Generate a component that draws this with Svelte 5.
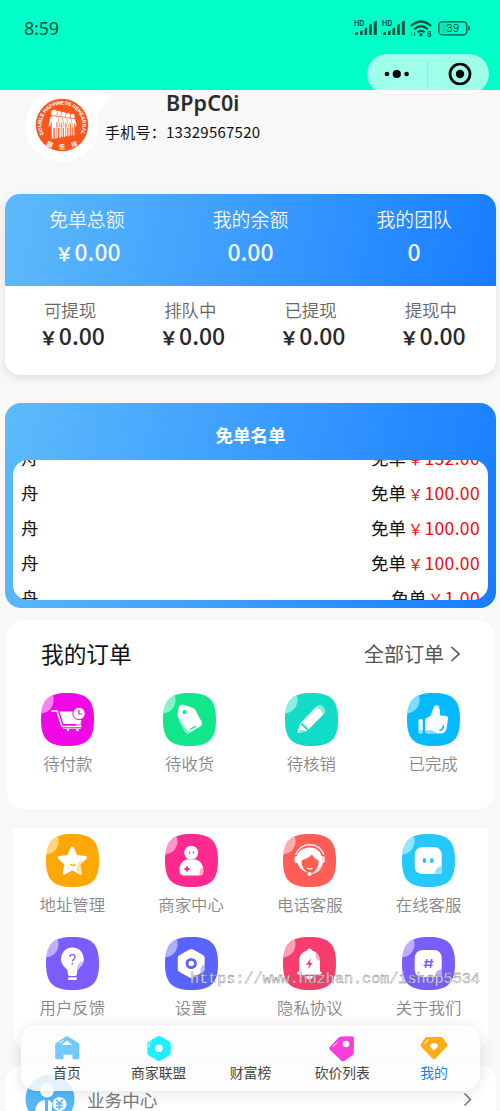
<script lang="ts">
	const totals = [
		{ label: '免单总额', sign: '￥', value: '0.00' },
		{ label: '我的余额', sign: '', value: '0.00' },
		{ label: '我的团队', sign: '', value: '0' }
	];

	const balances = [
		{ label: '可提现', sign: '￥', value: '0.00' },
		{ label: '排队中', sign: '￥', value: '0.00' },
		{ label: '已提现', sign: '￥', value: '0.00' },
		{ label: '提现中', sign: '￥', value: '0.00' }
	];

	const winners = ['132.00', '100.00', '100.00', '100.00', '1.00'];

	const orders = [
		{ icon: 'cart', color: '#f008e4', label: '待付款' },
		{ icon: 'tag', color: '#12e68b', label: '待收货' },
		{ icon: 'pencil', color: '#12dcc8', label: '待核销' },
		{ icon: 'thumb', color: '#05b9ff', label: '已完成' }
	];

	const services = [
		{ icon: 'star', color: '#ffa703', label: '地址管理' },
		{ icon: 'person', color: '#ff2a90', label: '商家中心' },
		{ icon: 'headset', color: '#ff5d56', label: '电话客服' },
		{ icon: 'chat', color: '#25c8ff', label: '在线客服' },
		{ icon: 'bulb', color: '#7a5cff', label: '用户反馈' },
		{ icon: 'hexagon', color: '#5963ff', label: '设置' },
		{ icon: 'bell', color: '#f63d6c', label: '隐私协议' },
		{ icon: 'hash', color: '#7a5cff', label: '关于我们' }
	];

	const tabs = [
		{ icon: 'home', label: '首页' },
		{ icon: 'shop', label: '商家联盟' },
		{ icon: '', label: '财富榜' },
		{ icon: 'price', label: '砍价列表' },
		{ icon: 'mine', label: '我的' }
	];

	let activeTab = $state('我的');
</script>

{#snippet signal()}
	<svg class="signal" width="24" height="16" viewBox="0 0 24 16">
		<text x="0" y="6.2" font-size="7" font-weight="700">HD</text>
		<path d="M1 15v-2l3-1v3zM6 15v-4l2.500-1v5zM10.500 15V8.500l2.600-1V15zM15 15V5l2.800-1.300V15zM19.800 15V2l3-1.500V15z" />
	</svg>
{/snippet}

{#snippet stat(item)}
	<div class="stat">
		<span>{item.label}</span>
		<strong>{#if item.sign}<i>{item.sign}</i>{/if}{item.value}</strong>
	</div>
{/snippet}

{#snippet tile(icon, color)}
	<svg class="tile" width="53" height="53" viewBox="0 0 53 53" fill="#fff">
		<path
			d="M26.500 0C46 0 53 7 53 26.500S46 53 26.500 53 0 46 0 26.500 7 0 26.500 0z"
			fill={color}
		/>
		<path d="M11.700 2.200A13.500 13.500 0 0 1 .3 20.500Q1.700 5 11.700 2.200z" opacity=".5" />
		{#if icon === 'cart'}
			<path d="M18.500 18.500h21.500v10l-1.500 2.500H22.500z" />
			<path d="M36 27h4.500l-.5 6h-5z" opacity=".6" />
			<path d="M10 18h6l5 15.500h19.500" fill="none" stroke="#fff" stroke-width="1.700" />
			<path d="M22 35.500h18" stroke="#fff" stroke-width="1" opacity=".6" />
			<circle cx="27" cy="37" r="1.300" />
			<circle cx="36.500" cy="37" r="1.300" />
			<circle cx="38" cy="20.500" r="6.200" stroke={color} />
			<path d="M38 17v4h3" fill="none" stroke={color} stroke-width="1.200" />
		{:else if icon === 'tag'}
			<path d="M15 26l7 13q2 3 5 1l6-4z" opacity=".5" />
			<path
				fill-rule="evenodd"
				d="M18 12q1-1 3-.3l9 3.300q1.500.6 2.300 2l6.200 11.500q1.600 3-1 4.800l-9 5q-2.500 1.300-4.200-1l-8.800-12.300q-1.200-1.600-1-3l1-7.500q.2-2 2.500-2.500zM21.500 17a2.100 2.100 0 1 0 .1 0z"
			/>
			<path d="M27.500 36.200l5-2.800" stroke={color} stroke-width="1.300" stroke-linecap="round" />
		{:else if icon === 'pencil'}
			<path d="M31 14q3-3.500 6.500-.5t2 6.800l-16 16.200-8-6.500z" />
			<path d="M31 14q3-3.500 6.500-.5t2 6.800l-1.500 1.500q-1-5-7-7.800z" fill={color} opacity=".5" />
			<path d="M15 30.500l7.500 7-8.500 2.700q-2 .3-1.500-1.700z" />
			<path d="M12.500 39q3-4 8-1l-7 2.300z" fill={color} opacity=".5" />
			<path d="M16.500 30.500l6 5.500" stroke={color} stroke-width="1.500" />
		{:else if icon === 'thumb'}
			<rect x="11.500" y="26" width="4.200" height="14.500" rx="1.300" />
			<path
				d="M18 27q0-1.500 1.500-2l3-1.500q1.300-.8 1.800-2.500l2.500-7q1-2.500 3.400-2 2.300.5 2.400 3l.4 7.500 5.500.3q2.700.5 2.500 3l-1.400 9.700q-.8 4.500-5.100 4.900H21q-3 0-3-2.500z"
			/>
			<path d="M11.500 37h4.200v2.500q-2 2-4.200 0zM18 38q6-3 13 2.500H21q-3 0-3-2.500zM28 13q2-2 5 1.500v2q-2-3-5-3.500z" fill={color} opacity=".45" />
			<path d="M36.500 32.500q-.5 4-3.500 5" fill="none" stroke={color} stroke-width="1.500" stroke-linecap="round" />
		{:else if icon === 'star'}
			<path
				d="M26.300 14l3.900 8.400 9.300 1.200-6.800 6.400 1.700 9.200-8.100-4.500-8.100 4.500L20 30l-6.800-6.400 9.200-1.200z"
				stroke="#fff"
				stroke-width="3"
				stroke-linejoin="round"
			/>
			<path d="M31.500 31q2-5 6-5l-3.500 4.500 1.800 9q-4 0-5.300-4z" fill={color} opacity=".35" />
			<path d="M24.500 30.200q2.300 2.400 4.700 0" fill="none" stroke={color} stroke-width="1.300" stroke-linecap="round" />
		{:else if icon === 'person'}
			<circle cx="26.200" cy="18.700" r="7" />
			<path d="M21 25.500h10q7.500 3 7.500 11.500 0 4.500-4 4.500H19q-4.500 0-4.500-5.500 0-7.500 6.500-10.500z" />
			<path d="M38.500 33v4q0 4.500-4 4.500-1-7 4-8.500z" fill={color} opacity=".4" />
			<path d="M24.500 17.500v2M28.500 17.500v2" stroke={color} stroke-width="1.300" />
			<path d="M19.500 35h5M22 32.500v5" stroke={color} stroke-width="2" />
		{:else if icon === 'headset'}
			<path d="M12.500 21q4-10 14.200-10.300Q37 11 41 21" fill="none" stroke="#fff" stroke-width="1.200" />
			<path d="M26.700 13.500c8 0 13 6 12.500 14-1 6-5 10-9 11 4-3 5.500-6.500 5.500-12-3-1-5-3-6.700-6-3 3-6 4.500-10.500 6-.3 5 2 9 6 12-6-1-11-8-11-14s5-11 13.200-11z" />
			<rect x="11.500" y="22" width="4.500" height="7" rx="2" />
			<rect x="37.500" y="22" width="4.500" height="7" rx="2" opacity=".7" />
			<path d="M39.700 28q-2 11-12.500 12" fill="none" stroke="#fff" stroke-width="1.200" />
			<circle cx="26.500" cy="40" r="2" />
			<path d="M24 34q3 1.800 5.500 0" fill="none" stroke="#fff" stroke-width="1.200" />
		{:else if icon === 'chat' || icon === 'hash'}
			<path d="M21.500 13h10q8.200 0 8.200 8.500V40H20.500q-7.500 0-7.800-7.500V21.500q0-8.500 8.800-8.500z" />
			<path d="M39.700 32v8h-7q.5-7 7-8z" fill={color} opacity=".5" />
			{#if icon === 'chat'}
				<ellipse cx="22.500" cy="26.500" rx="1.900" ry="2.500" fill={color} />
				<ellipse cx="29.800" cy="26.500" rx="1.900" ry="2.500" fill={color} />
			{:else}
				<path d="M25 22l-1.500 9M29.800 22l-1.500 9M22.300 24.800h9M21.600 28.300h9" stroke={color} stroke-width="1.500" />
			{/if}
		{:else if icon === 'bulb'}
			<path d="M26.300 10.500a11.400 11.400 0 0 1 7 20.400q-2.200 1.600-2.300 4v2q0 2-2 2h-5.200q-2 0-2-2v-2q0-2.400-2.300-4a11.400 11.400 0 0 1 6.800-20.400z" />
			<path d="M37.500 24q-6 1-7 9l2.800-2.100q3.500-2.700 4.200-6.900z" fill={color} opacity=".4" />
			<rect x="22" y="40.200" width="9" height="2.700" rx="1.200" />
			<path d="M23.700 20.300q.2-2.600 2.800-2.600t2.500 2.500c0 2-2.700 2-2.700 4.300M26.300 26v1.600" fill="none" stroke={color} stroke-width="1.300" />
		{:else if icon === 'hexagon'}
			<path d="M24.500 12.500q1.800-1 3.500 0L38 18q1.700 1 1.700 2.800v11.400q0 1.800-1.700 2.800l-10 5.500q-1.700 1-3.500 0l-10-5.500q-1.700-1-1.700-2.800V20.800q0-1.800 1.700-2.800z" />
			<circle cx="26.200" cy="26.500" r="4.200" fill="#fff" stroke={color} stroke-width="2.800" />
			<path d="M39.700 27v5.200q0 1.800-1.700 2.800l-2.500 1.400q-1-7 4.200-9.400z" fill={color} opacity=".4" />
		{:else if icon === 'bell'}
			<path d="M24 13.500a2.600 2.600 0 0 1 5 0q7.800 2 8 10v10.700q1.500.2 1.700 1.700.1 1.800-2 1.800H16q-2 0-2-1.800.2-1.500 2.200-1.700V23.500q.2-8 7.800-10z" />
			<path d="M37 18v6q-5-1-4.500-8 3 0 4.500 2z" fill={color} opacity=".4" />
			<path d="M23 39h7q-1 3.500-3.500 3.500T23 39z" />
			<path d="M28 21l-5 6.700h3L25 32l4.500-6.200h-2.700z" fill={color} />
		{/if}
	</svg>
{/snippet}

<div class="page">
	<header>
		<div class="status-bar">
			<span class="time">8:59</span>
			<div class="status-icons">
				{@render signal()}
				{@render signal()}
				<svg width="23" height="17" viewBox="0 0 23 17">
					<g fill="none" stroke="currentColor" stroke-width="2.200">
						<path d="M1 6q10-9 20 0M4.300 9.200q6.700-6 13.400 0M7.500 12.300q3.500-3 7 0" />
					</g>
					<circle cx="11" cy="14.700" r="1.600" />
					<path d="M1.500 16v-4M4.500 12v4" stroke="currentColor" stroke-width="1.200" opacity=".7" />
					<text x="17" y="16.500" font-size="7" font-weight="700">6</text>
				</svg>
				<svg class="battery" width="33" height="15" viewBox="0 0 33 15">
					<rect x=".8" y=".8" width="28" height="13" rx="3.500" fill="none" stroke="currentColor" stroke-width="1.300" />
					<rect x="2.500" y="2.500" width="9" height="9.600" rx="2" opacity=".15" />
					<rect x="30.300" y="5" width="1.700" height="4.500" rx=".8" />
					<text x="14.800" y="11" font-size="10.500" text-anchor="middle">39</text>
				</svg>
			</div>
		</div>
		<div class="capsule">
			<svg width="26" height="12" viewBox="0 0 26 12">
				<circle cx="3" cy="6" r="2.300" />
				<circle cx="12.800" cy="6" r="4.100" />
				<circle cx="22.600" cy="6" r="2.300" />
			</svg>
			<span class="divider"></span>
			<svg width="24" height="24" viewBox="0 0 24 24">
				<circle cx="12" cy="12" r="10" fill="none" stroke="#000" stroke-width="2.700" />
				<circle cx="12" cy="12" r="4.200" />
			</svg>
		</div>
	</header>

	<section class="profile">
		<svg class="avatar" width="95" height="73" viewBox="0 0 95 73">
			<path d="M20 0h52q10 5 15 6l-13 14q-4 5-6 12z" fill="#fff" />
			<circle cx="36" cy="35.500" r="36.500" fill="#fff" />
			<circle cx="36" cy="35" r="26.200" fill="#fb561d" />
			<defs>
				<path id="ring" d="M17.800 44.200A20.400 20.400 0 1 1 54.200 44.200" />
			</defs>
			<text class="ring-text">
				<textPath href="#ring" textLength="82">DOUBLE HAPPINESS REHEARSAL</textPath>
			</text>
			<g fill="#fff">
				{#each [0, 1, 2, 3, 4] as i}
					<g transform={`translate(${46.500 - i * 4.600} ${29 - i * 0.600}) scale(${0.780 + i * 0.070})`} stroke="#fb561d" stroke-width=".5">
						<circle cx="0" cy="-3.500" r="3.100" />
						<path d="M-3.500 0Q0-1.500 3.500 0L5.500 9l-2 .5-1-4V21H.3V11h-.6v10h-2.200V5.500l-1 4-2-.5z" />
					</g>
				{/each}
			</g>
			<g class="stamp">
				<text x="21" y="56.500" transform="rotate(22 24 54)">囍</text>
				<text x="33" y="58.500">乐</text>
				<text x="45" y="56.500" transform="rotate(-22 48 54)">排</text>
			</g>
		</svg>
		<div class="who">
			<h1>BPpC0i</h1>
			<p><span>手机号：</span>13329567520</p>
		</div>
	</section>

	<section class="wallet">
		<div class="totals">
			{#each totals as item}
				{@render stat(item)}
			{/each}
		</div>
		<div class="balances">
			{#each balances as item}
				{@render stat(item)}
			{/each}
		</div>
	</section>

	<section class="winners">
		<h2>免单名单</h2>
		<div class="scroller">
			<ul>
				{#each winners as amount}
					<li>
						<span>舟</span>
						<span>免单<em><i>￥</i>{amount}</em></span>
					</li>
				{/each}
			</ul>
		</div>
	</section>

	<section class="orders">
		<div class="orders-head">
			<h2>我的订单</h2>
			<span class="all">
				全部订单
				<svg width="11" height="16" viewBox="0 0 11 16">
					<path d="M1.500 1l7.500 7-7.500 7" fill="none" stroke="#555" stroke-width="1.700" />
				</svg>
			</span>
		</div>
		<div class="grid">
			{#each orders as item}
				<div class="cell">
					{@render tile(item.icon, item.color)}
					<span>{item.label}</span>
				</div>
			{/each}
		</div>
	</section>

	<section class="services">
		<div class="grid">
			{#each services as item}
				<div class="cell">
					{@render tile(item.icon, item.color)}
					<span>{item.label}</span>
				</div>
			{/each}
		</div>
	</section>

	<section class="business">
		<svg width="50" height="50" viewBox="0 0 50 50">
			<circle cx="25" cy="25" r="24.500" fill="#56b7f8" />
			<circle cx="22" cy="16.500" r="7" fill="#fff" />
			<path d="M10 37q1-10 10-11v14H10zM23 26q3 1 4 3v11h-4z" fill="#fff" />
			<circle cx="34.500" cy="30" r="7" fill="#fff" />
			<path d="M31 25.500l3.500 4 3.500-4M34.500 29.500V36M31 30h7M31 33h7" fill="none" stroke="#56b7f8" stroke-width="1.400" />
		</svg>
		<span>业务中心</span>
		<svg width="10" height="15" viewBox="0 0 10 15">
			<path d="M1.500 1.500l6 6-6 6" fill="none" stroke="#777" stroke-width="1.600" />
		</svg>
	</section>

	<nav>
		{#each tabs as tab}
			<button class:active={activeTab === tab.label} onclick={() => (activeTab = tab.label)}>
				<svg width="28" height="28" viewBox="0 0 28 28">
					{#if tab.icon === 'home'}
						<path d="M12.500 2.700q1.500-1 3 0L25.500 9q.8.600.8 1.700v13q0 1.500-1.500 1.500h-5.300v-4.500h-9v4.500H3.700q-1.500 0-1.500-1.500v-13Q2.200 9.600 3 9z" fill="#73c8ff" />
						<path d="M8.500 11l5.500-4.500 5.500 4.500zM6 8.800l4.500-3 .4.700-4.500 3z" fill="#fff" />
					{:else if tab.icon === 'shop'}
						<path d="M12.300 2.400q1.700-1 3.400 0l8.500 4.800q1.500.9 1.500 2.700v9q0 1.800-1.500 2.700L15.700 26.500q-1.700 1-3.400 0L3.800 21.600q-1.500-.9-1.500-2.700v-9q0-1.800 1.500-2.700z" fill="#1feeff" />
						<circle cx="14" cy="14.200" r="3.800" fill="#fff" />
						<path d="M4 13.500q-.2-3 .5-5L6.500 7.200" fill="none" stroke="#fff" stroke-width=".9" />
					{:else if tab.icon === 'price'}
						<path d="M13 2.500l11-.3q2 0 2 2l-.2 14.300q0 1.500-1 2.500l-8.500 6q-1.800 1-3.300-.4L2 16q-1.500-1.500-.2-3l8.400-9q1.300-1.400 2.800-1.500z" fill="#f83fdc" />
						<circle cx="18" cy="10" r="3.300" fill="#fff" />
						<path d="M4.500 13L9 8.500" stroke="#fff" stroke-width="1" />
					{:else if tab.icon === 'mine'}
						<path d="M7 3h14q1.200 0 2 1l4 6q1 1.500-.3 2.700L15.500 24.500q-1.500 1.300-3 0L1.200 12.700Q0 11.500 1 10l4-6q.8-1 2-1z" fill="#ffac17" />
						<path d="M10 12.500q0-3.300 4-3.300t4 3.300L14 16.500z" fill="#fff" />
						<path d="M4.500 10l4-4.500" stroke="#fff" stroke-width="1" />
					{/if}
				</svg>
				<span>{tab.label}</span>
			</button>
		{/each}
	</nav>

	<div class="watermark">https://www.huzhan.com/ishop5534</div>
</div>

<style>
	:global(body) {
		background: #f8f8f8;
	}

	.page {
		position: relative;
		display: flex;
		flex-direction: column;
		width: 500px;
		height: 1111px;
		overflow: hidden;
		background: #f8f8f8;
		color: #111;
		font-family: 'Noto Sans CJK SC', sans-serif;
	}

	h1,
	h2,
	p,
	ul {
		margin: 0;
		padding: 0;
	}

	i {
		font-style: normal;
	}

	svg {
		flex: none;
		display: block;
	}

	header {
		flex: none;
		display: flex;
		flex-direction: column;
		align-items: flex-end;
		height: 90px;
		background: #00ffc8;
		position: relative;
		z-index: 2;
	}

	.status-bar {
		flex: none;
		display: flex;
		align-items: center;
		justify-content: space-between;
		align-self: stretch;
		height: 54px;
		padding: 2px 29px 0 24px;
		box-sizing: border-box;
		color: #07513f;
	}

	.status-bar svg {
		fill: currentColor;
		font-family: 'Inter', sans-serif;
		overflow: visible;
	}

	.time {
		font-family: 'Noto Sans', sans-serif;
		font-size: 18px;
		letter-spacing: -0.2px;
	}

	.status-icons {
		display: flex;
		align-items: center;
		gap: 4px;
	}

	.battery {
		margin-left: 1px;
	}

	.capsule {
		flex: none;
		display: flex;
		align-items: center;
		justify-content: space-between;
		width: 122px;
		height: 40px;
		margin-right: 11px;
		padding: 0 17px;
		box-sizing: border-box;
		border-radius: 20px;
		background: rgba(255, 255, 255, 0.62);
		box-shadow: 0 0 1px rgba(0, 0, 0, 0.18);
	}

	.divider {
		width: 1px;
		height: 24px;
		margin-right: 3px;
		background: rgba(0, 120, 100, 0.13);
	}

	.profile {
		flex: none;
		display: flex;
		height: 104px;
		padding-left: 26px;
	}

	.ring-text {
		fill: #fff;
		font-family: 'Liberation Sans', sans-serif;
		font-size: 5.200px;
		font-weight: 700;
	}

	.stamp {
		fill: #fff;
		font-size: 6px;
		font-weight: 700;
	}

	.who {
		margin-left: -16px;
	}

	h1 {
		margin-left: 61px;
		color: #2c2c2c;
		font-family: 'Noto Sans', sans-serif;
		font-size: 21.500px;
		font-weight: 600;
		line-height: 25px;
		letter-spacing: 0.1px;
	}

	.who p {
		display: flex;
		margin-top: 6px;
		font-size: 15px;
		line-height: 22px;
		letter-spacing: 0.25px;
	}

	.who p span {
		width: 61px;
	}

	.wallet {
		flex: none;
		height: 181px;
		margin: 0 4px 0 5px;
		overflow: hidden;
		border-radius: 15px;
		background: #fff;
		box-shadow: 0 3px 10px rgba(0, 0, 0, 0.1);
	}

	.totals,
	.winners {
		background: linear-gradient(100deg, #5dbafa, #3e9ffe 45%, #177dff);
	}

	.totals {
		display: flex;
		height: 92px;
		padding-top: 12px;
		box-sizing: border-box;
		color: #f2f4f8;
	}

	.balances {
		display: flex;
		padding: 11px 5px 0;
	}

	.stat {
		flex: 1;
		display: flex;
		flex-direction: column;
		align-items: center;
	}

	.stat span {
		font-size: 18.900px;
		line-height: 26px;
		font-weight: 350;
	}

	.stat strong {
		font-size: 23px;
		font-weight: 500;
		line-height: 26px;
	}

	.stat i {
		margin: 0 1px 0 2px;
		font-size: 18.500px;
		font-weight: 700;
	}

	.totals strong {
		margin-top: 6px;
	}

	.balances span {
		color: #666;
		font-size: 17.500px;
		line-height: 25px;
	}

	.balances strong {
		padding-left: 2px;
		color: #292929;
	}

	.winners {
		flex: none;
		height: 205px;
		margin: 28px 4px 0 5px;
		padding: 0 8px;
		box-sizing: border-box;
		border-radius: 16px;
	}

	.winners h2 {
		height: 57px;
		color: #fff;
		font-size: 17.500px;
		font-weight: 700;
		line-height: 64px;
		text-align: center;
	}

	.scroller {
		height: 140px;
		overflow: hidden;
		border-radius: 15px;
		background: #fff;
	}

	.scroller ul {
		margin-top: -20px;
		list-style: none;
	}

	li {
		display: flex;
		justify-content: space-between;
		height: 35px;
		padding: 0 8px;
		font-size: 17.500px;
		line-height: 35px;
	}

	em {
		color: #ee0909;
		font-style: normal;
		letter-spacing: 0.35px;
	}

	em i {
		margin: 0 1px 0 2px;
		font-size: 15px;
	}

	.orders {
		flex: none;
		height: 189px;
		margin: 12px 6px 0 7px;
		border-radius: 16px;
		background: #fff;
	}

	.orders-head {
		display: flex;
		align-items: center;
		justify-content: space-between;
		height: 67px;
		padding: 0 33px 0 34px;
	}

	.orders-head h2 {
		font-size: 22.700px;
		font-weight: 400;
	}

	.all {
		display: flex;
		align-items: center;
		gap: 6px;
		color: #555;
		font-size: 20px;
	}

	.grid {
		display: grid;
		grid-template-columns: repeat(4, 1fr);
	}

	.orders .grid {
		padding: 6px 0 0;
	}

	.cell {
		display: flex;
		flex-direction: column;
		align-items: center;
		color: #888;
		font-size: 16.400px;
		font-weight: 350;
		line-height: 24px;
	}

	.cell span {
		margin: 5px 0 1px;
	}

	.services {
		flex: none;
		height: 223px;
		margin: 19px 12px 0 13px;
		padding-top: 6px;
		box-sizing: border-box;
		border-radius: 0 0 16px 16px;
		background: #fff;
	}

	.services .grid {
		row-gap: 20px;
	}

	.business {
		flex: none;
		display: flex;
		align-items: center;
		height: 66px;
		margin: 15px 4px 0 5px;
		padding: 0 23px 0 20px;
		border-radius: 16px;
		background: #fff;
		color: #777;
		font-size: 17.600px;
	}

	.business span {
		flex: 1;
		margin-left: 12px;
	}

	nav {
		position: absolute;
		left: 21px;
		bottom: 20px;
		display: flex;
		width: 459px;
		height: 66px;
		border-radius: 16px;
		background: rgba(253, 253, 253, 0.85);
		box-shadow: 0 2px 14px rgba(0, 0, 0, 0.12);
	}

	button {
		flex: 1;
		display: flex;
		flex-direction: column;
		align-items: center;
		padding: 9px 0 0;
		border: 0;
		background: none;
		color: #444;
		font: 13.800px/20px 'Noto Sans CJK SC', sans-serif;
	}

	button.active {
		color: #167ff0;
	}

	.watermark {
		position: absolute;
		top: 968px;
		left: 190px;
		color: rgba(255, 255, 255, 0.9);
		font-family: 'Liberation Mono', monospace;
		font-size: 15.100px;
		line-height: 22px;
		-webkit-text-stroke: 0.400px #777;
		pointer-events: none;
	}
</style>
